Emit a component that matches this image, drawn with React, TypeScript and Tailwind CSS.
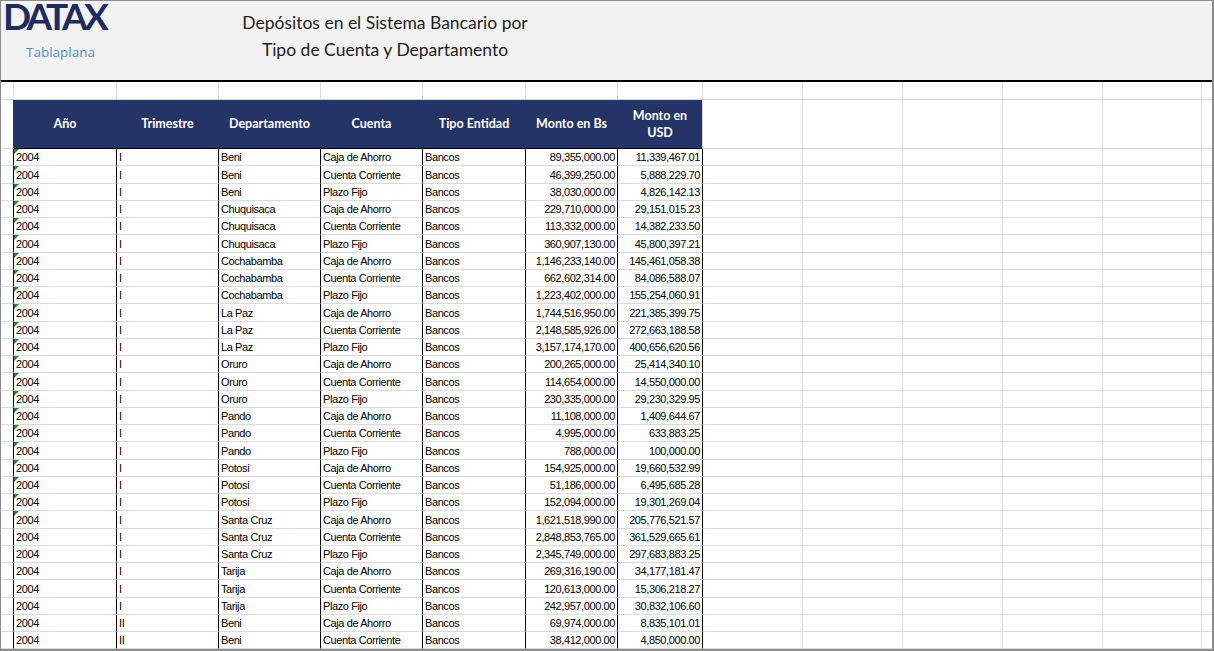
import React from "react";

const W = [
  "w-[13px]",
  "w-[103px]",
  "w-[102px]",
  "w-[102px]",
  "w-[102px]",
  "w-[103px]",
  "w-[92px]",
  "w-[85px]",
  "w-[100px]",
  "w-[100px]",
  "w-[100px]",
  "w-[100px]",
  "w-[99px]",
];

type Row = [string, string, string, string, string, string, string];

const rows: Row[] = [
  ["2004", "I", "Beni", "Caja de Ahorro", "Bancos", "89,355,000.00", "11,339,467.01"],
  ["2004", "I", "Beni", "Cuenta Corriente", "Bancos", "46,399,250.00", "5,888,229.70"],
  ["2004", "I", "Beni", "Plazo Fijo", "Bancos", "38,030,000.00", "4,826,142.13"],
  ["2004", "I", "Chuquisaca", "Caja de Ahorro", "Bancos", "229,710,000.00", "29,151,015.23"],
  ["2004", "I", "Chuquisaca", "Cuenta Corriente", "Bancos", "113,332,000.00", "14,382,233.50"],
  ["2004", "I", "Chuquisaca", "Plazo Fijo", "Bancos", "360,907,130.00", "45,800,397.21"],
  ["2004", "I", "Cochabamba", "Caja de Ahorro", "Bancos", "1,146,233,140.00", "145,461,058.38"],
  ["2004", "I", "Cochabamba", "Cuenta Corriente", "Bancos", "662,602,314.00", "84,086,588.07"],
  ["2004", "I", "Cochabamba", "Plazo Fijo", "Bancos", "1,223,402,000.00", "155,254,060.91"],
  ["2004", "I", "La Paz", "Caja de Ahorro", "Bancos", "1,744,516,950.00", "221,385,399.75"],
  ["2004", "I", "La Paz", "Cuenta Corriente", "Bancos", "2,148,585,926.00", "272,663,188.58"],
  ["2004", "I", "La Paz", "Plazo Fijo", "Bancos", "3,157,174,170.00", "400,656,620.56"],
  ["2004", "I", "Oruro", "Caja de Ahorro", "Bancos", "200,265,000.00", "25,414,340.10"],
  ["2004", "I", "Oruro", "Cuenta Corriente", "Bancos", "114,654,000.00", "14,550,000.00"],
  ["2004", "I", "Oruro", "Plazo Fijo", "Bancos", "230,335,000.00", "29,230,329.95"],
  ["2004", "I", "Pando", "Caja de Ahorro", "Bancos", "11,108,000.00", "1,409,644.67"],
  ["2004", "I", "Pando", "Cuenta Corriente", "Bancos", "4,995,000.00", "633,883.25"],
  ["2004", "I", "Pando", "Plazo Fijo", "Bancos", "788,000.00", "100,000.00"],
  ["2004", "I", "Potosi", "Caja de Ahorro", "Bancos", "154,925,000.00", "19,660,532.99"],
  ["2004", "I", "Potosi", "Cuenta Corriente", "Bancos", "51,186,000.00", "6,495,685.28"],
  ["2004", "I", "Potosi", "Plazo Fijo", "Bancos", "152,094,000.00", "19,301,269.04"],
  ["2004", "I", "Santa Cruz", "Caja de Ahorro", "Bancos", "1,621,518,990.00", "205,776,521.57"],
  ["2004", "I", "Santa Cruz", "Cuenta Corriente", "Bancos", "2,848,853,765.00", "361,529,665.61"],
  ["2004", "I", "Santa Cruz", "Plazo Fijo", "Bancos", "2,345,749,000.00", "297,683,883.25"],
  ["2004", "I", "Tarija", "Caja de Ahorro", "Bancos", "269,316,190.00", "34,177,181.47"],
  ["2004", "I", "Tarija", "Cuenta Corriente", "Bancos", "120,613,000.00", "15,306,218.27"],
  ["2004", "I", "Tarija", "Plazo Fijo", "Bancos", "242,957,000.00", "30,832,106.60"],
  ["2004", "II", "Beni", "Caja de Ahorro", "Bancos", "69,974,000.00", "8,835,101.01"],
  ["2004", "II", "Beni", "Cuenta Corriente", "Bancos", "38,412,000.00", "4,850,000.00"],
];

const headers = ["Año", "Trimestre", "Departamento", "Cuenta", "Tipo Entidad", "Monto en Bs"];

function EmptyCells() {
  return (
    <>
      {W.slice(8).map((w, i) => (
        <div key={i} className={`${w} shrink-0 border-r border-b border-[#dadada]`} />
      ))}
      <div className="flex-1 border-b border-[#dadada]" />
    </>
  );
}

export default function App() {
  return (
    <div className="w-[1214px] h-[651px] overflow-hidden bg-white border-l border-t border-r-2 border-b-2 border-[#8c8c8c] flex flex-col font-['Liberation_Sans',Arial,sans-serif]">
      {/* Top banner */}
      <div className="h-[79px] shrink-0 bg-[#f2f2f2] flex">
        <div className="w-[229px] shrink-0 flex flex-col">
          <div className="pl-[2px] h-[32px] text-[37px] leading-[30px] font-bold tracking-[-0.1em] text-[#1f2c5e] font-['Lato',sans-serif]">
            DATAX
          </div>
          <div className="pl-[25px] mt-[10px] text-[13.5px] leading-[18px] text-[#4a8fd8] font-['Open_Sans',sans-serif]">
            Tablaplana
          </div>
        </div>
        <div className="w-[310px] shrink-0 pt-[8px] text-center text-[17.5px] leading-[27px] text-[#1e1e1e] font-['Lato',sans-serif]">
          <div>Depósitos en el Sistema Bancario por</div>
          <div>Tipo de Cuenta y Departamento</div>
        </div>
      </div>
      <div className="h-[2px] shrink-0 bg-black" />

      {/* Blank row */}
      <div className="flex h-[18px] shrink-0">
        {W.slice(0, 8).map((w, i) => (
          <div key={i} className={`${w} shrink-0 border-r border-b border-[#dadada]`} />
        ))}
        <EmptyCells />
      </div>

      {/* Header row */}
      <div className="flex h-[49px] shrink-0">
        <div className="w-[13px] shrink-0 border-r border-b border-r-[#243466] border-b-[#dadada]" />
        {headers.map((h, i) => (
          <div
            key={h}
            className={`${W[i + 1]} shrink-0 bg-[#243466] border-r border-b border-r-[#243466] border-b-black flex items-center justify-center text-white font-bold text-[12.5px] font-['Lato',sans-serif]`}
          >
            {h}
          </div>
        ))}
        <div className="w-[85px] shrink-0 bg-[#243466] border-r border-b border-r-[#dadada] border-b-black flex items-center justify-center text-center text-white font-bold text-[12.5px] leading-[17px] font-['Lato',sans-serif]">
          <span>
            Monto en
            <br />
            USD
          </span>
        </div>
        <EmptyCells />
      </div>

      {/* Data rows */}
      {rows.map((r, ri) => (
        <div key={ri} className={`flex shrink-0 ${ri % 4 === 1 ? "h-[18px]" : "h-[17px]"} text-[11px] leading-[16px] tracking-[-0.4px] text-black`}>
          <div className="w-[13px] shrink-0 border-r border-b border-r-black border-b-[#dadada]" />
          {r.map((c, ci) => (
            <div
              key={ci}
              className={`${W[ci + 1]} shrink-0 relative border-r border-b border-r-black border-b-[#dadada] flex items-center whitespace-nowrap overflow-hidden ${ci >= 5 ? "justify-end pr-[2px]" : "pl-[2px]"}`}
            >
              {ci === 0 && ri < 22 ? (
                <span className="absolute left-0 top-0 w-0 h-0 border-t-[5px] border-r-[5px] border-t-[#1f8a2a] border-r-transparent" />
              ) : null}
              {c}
            </div>
          ))}
          <EmptyCells />
        </div>
      ))}
      <div className="flex-1" />
    </div>
  );
}
